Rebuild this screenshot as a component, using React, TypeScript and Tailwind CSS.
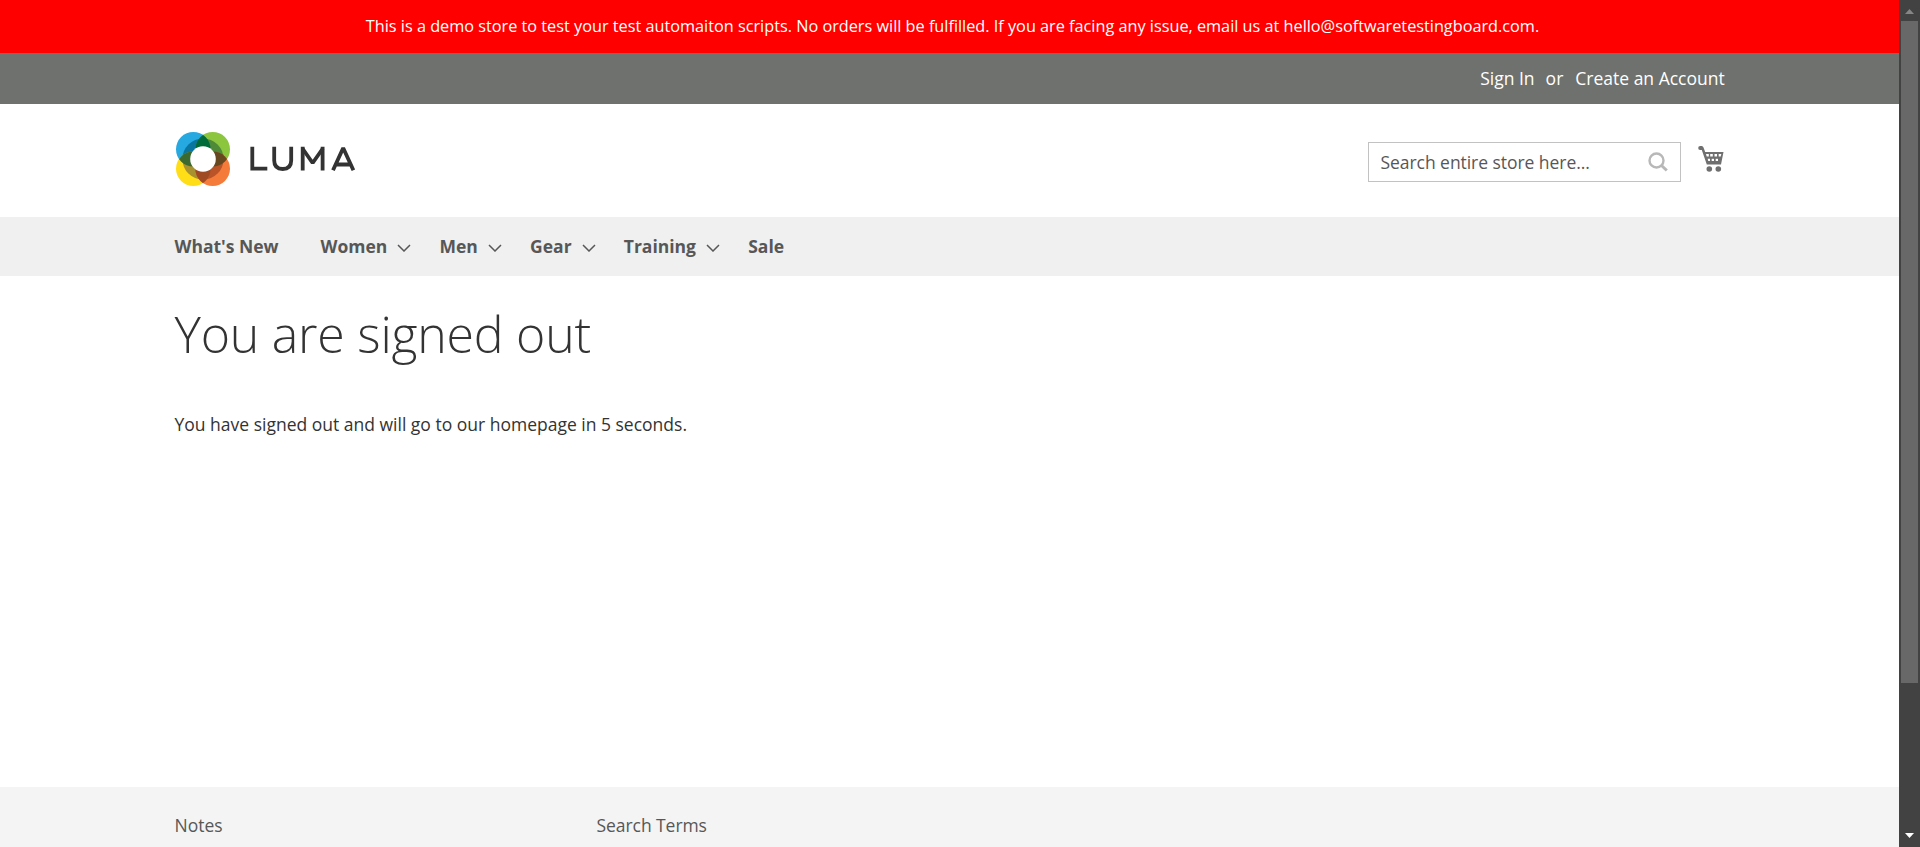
import React from "react";

const nav: { label: string; arrow?: boolean }[] = [
  { label: "What's New" },
  { label: "Women", arrow: true },
  { label: "Men", arrow: true },
  { label: "Gear", arrow: true },
  { label: "Training", arrow: true },
  { label: "Sale" },
];

function Logo() {
  return (
    <div className="flex h-14 items-center">
      <svg width="56" height="56" viewBox="-28 -28 56 56">
        <defs>
          <clipPath id="b"><circle cx="-9.7" cy="-9.7" r="17.3" /></clipPath>
          <clipPath id="g"><circle cx="9.7" cy="-9.7" r="17.3" /></clipPath>
          <clipPath id="y"><circle cx="-9.7" cy="9.7" r="17.3" /></clipPath>
          <clipPath id="o"><circle cx="9.7" cy="9.7" r="17.3" /></clipPath>
        </defs>
        <circle cx="-9.7" cy="-9.7" r="17.3" fill="#26a8e0" />
        <circle cx="9.7" cy="-9.7" r="17.3" fill="#8cc63f" />
        <circle cx="-9.7" cy="9.7" r="17.3" fill="#ffde17" />
        <circle cx="9.7" cy="9.7" r="17.3" fill="#f47b3a" />
        <g clipPath="url(#b)"><circle r="20.6" fill="#0a76a0" /></g>
        <g clipPath="url(#g)"><circle r="20.6" fill="#4f8a38" /></g>
        <g clipPath="url(#y)"><circle r="20.6" fill="#a8922f" /></g>
        <g clipPath="url(#o)"><circle r="20.6" fill="#b85428" /></g>
        <g clipPath="url(#b)"><circle cx="9.7" cy="-9.7" r="17.3" fill="#006b3a" /></g>
        <g clipPath="url(#b)"><circle cx="-9.7" cy="9.7" r="17.3" fill="#3b6a30" /></g>
        <g clipPath="url(#g)"><circle cx="9.7" cy="9.7" r="17.3" fill="#664820" /></g>
        <g clipPath="url(#y)"><circle cx="9.7" cy="9.7" r="17.3" fill="#a04a24" /></g>
        <circle r="12.8" fill="#fff" />
      </svg>
      <svg className="ml-[18px]" width="108" height="28" viewBox="0 0 108 28" fill="none" stroke="#333" strokeWidth="3.8">
        <path d="M3.300 1.700V23.700H18.300" />
        <path d="M25.200 1.700V15.500Q25.200 24 33.700 24T42.200 15.500V1.700" />
        <path d="M53.700 25.600V1.700M73.600 25.600V1.700" />
        <path d="M53.500 3.500L63.650 18L73.800 3.500" strokeLinejoin="bevel" />
        <path d="M84 25.300L94.200 3L104.400 25.300M87.500 19.500H100.900" strokeLinejoin="bevel" />
      </svg>
    </div>
  );
}

function Cart() {
  return (
    <svg width="26" height="28" viewBox="0 0 26 28" fill="#6f6f6f">
      <path d="M2.200 0H3.800Q5 0 5.500 1.500L7.200 6H25.500L23 18.500H8.800L3.800 4H2.200A2 2 0 0 1 2.200 0Z" />
      <g fill="#fff">
        <path d="M8 8H10.800V10.500H8.700Z" />
        <path d="M12.200 8H14.800V10.500H12.200Z" />
        <path d="M16.500 8H19V10.500H16.500Z" />
        <path d="M20.700 8H23.300L22.700 10.500H20.700Z" />
        <path d="M9.700 12.800H12V15H10.200Z" />
        <path d="M13.700 12.800H16V15H13.700Z" />
        <path d="M17.700 12.800H20V15H17.700Z" />
      </g>
      <circle cx="11.300" cy="23" r="2.800" />
      <circle cx="20.300" cy="23" r="2.800" />
    </svg>
  );
}

export default function App() {
  return (
    <div className="flex h-[847px] w-[1920px] overflow-hidden bg-white font-['Open_Sans',sans-serif] text-[17.5px] leading-[25px] text-[#333]">
      <div className="flex w-[1899px] flex-col">
        <div className="flex h-[53px] shrink-0 items-center justify-center bg-[#f00] pl-[6px] text-[16.25px] text-white">
          This is a demo store to test your test automaiton scripts. No orders will be fulfilled. If you are facing any issue, email us at hello@softwaretestingboard.com.
        </div>
        <div className="flex h-[51px] shrink-0 items-center justify-end bg-[#6e716e] pr-[174.300px] text-white">
          <span>Sign In</span>
          <span className="ml-[11px]">or</span>
          <span className="ml-[12px]">Create an Account</span>
        </div>
        <header className="flex h-[113px] shrink-0 justify-between px-[174.500px] pt-[27px]">
          <Logo />
          <div className="flex pt-[11px]">
            <div className="flex h-10 w-[313px] items-center justify-between border border-[#c2c2c2] pl-3 pr-3 text-[#575757]">
              <span className="tracking-[-0.05px]">Search entire store here...</span>
              <svg width="20" height="20" viewBox="0 0 20 20" fill="none" stroke="#b8b8b8">
                <circle cx="8.500" cy="8.500" r="7" strokeWidth="2.400" />
                <path d="M13 13L18.800 18.500" strokeWidth="3" />
              </svg>
            </div>
            <div className="ml-[17px] mr-px mt-1"><Cart /></div>
          </div>
        </header>
        <nav className="flex h-[59px] shrink-0 items-center bg-[#f0f0f0] pl-[174.500px] font-bold text-[#575757]">
          {nav.map((n) => (
            <div key={n.label} className={n.arrow ? "mr-[28.200px] flex items-center" : "mr-[42px]"}>
              {n.label}
              {n.arrow && (
                <svg className="ml-[10px] mt-[3px]" width="14" height="8" viewBox="0 0 14 8" fill="none" stroke="#575757" strokeWidth="1.500">
                  <path d="M1 1L7 7L13 1" />
                </svg>
              )}
            </div>
          ))}
        </nav>
        <main className="flex-1 px-[174.500px] pt-[31px]">
          <h1 className="text-[50px] font-light leading-[55px] tracking-[-0.22px]">You are signed out</h1>
          <p className="mt-[50px]">You have signed out and will go to our homepage in 5 seconds.</p>
        </main>
        <footer className="flex h-[60px] shrink-0 bg-[#f4f4f4] px-[174.500px] pt-[26px] text-[#575757]">
          <div className="w-[422px]">Notes</div>
          <div className="tracking-[-0.06px]">Search Terms</div>
        </footer>
      </div>
      <div className="flex w-[21px] flex-col items-center bg-[#424242]">
        <svg className="mt-[9px]" width="9" height="5" viewBox="0 0 9 5"><path d="M0 5L4.500 0L9 5Z" fill="#868686" /></svg>
        <div className="mt-[7px] h-[662px] w-[17px] bg-[#686868]" />
        <svg className="mt-[150px]" width="9" height="5" viewBox="0 0 9 5"><path d="M0 0H9L4.500 5Z" fill="#fff" /></svg>
      </div>
    </div>
  );
}
